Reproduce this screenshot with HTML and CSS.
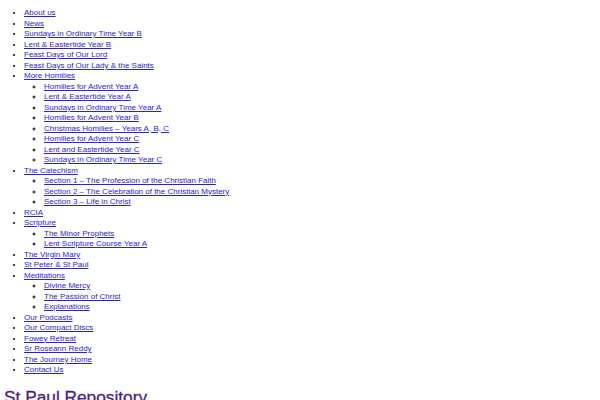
FILE: index.html
```html
<!DOCTYPE html>
<html lang="en">
<head>
<meta charset="utf-8">
<title>St Paul Repository</title>
<link rel="stylesheet" href="styles.css">
</head>
<body>
<ul class="menu">
  <li><a href="#">About us</a></li>
  <li><a href="#">News</a></li>
  <li><a href="#">Sundays in Ordinary Time Year B</a></li>
  <li><a href="#">Lent &amp; Eastertide Year B</a></li>
  <li><a href="#">Feast Days of Our Lord</a></li>
  <li><a href="#">Feast Days of Our Lady &amp; the Saints</a></li>
  <li><a href="#">More Homilies</a>
    <ul class="sub">
      <li><a href="#">Homilies for Advent Year A</a></li>
      <li><a href="#">Lent &amp; Eastertide Year A</a></li>
      <li><a href="#">Sundays in Ordinary Time Year A</a></li>
      <li><a href="#">Homilies for Advent Year B</a></li>
      <li><a href="#">Christmas Homilies – Years A, B, C</a></li>
      <li><a href="#">Homilies for Advent Year C</a></li>
      <li><a href="#">Lent and Eastertide Year C</a></li>
      <li><a href="#">Sundays in Ordinary Time Year C</a></li>
    </ul>
  </li>
  <li><a href="#">The Catechism</a>
    <ul class="sub">
      <li><a href="#">Section 1 – The Profession of the Christian Faith</a></li>
      <li><a href="#">Section 2 – The Celebration of the Christian Mystery</a></li>
      <li><a href="#">Section 3 – Life in Christ</a></li>
    </ul>
  </li>
  <li><a href="#">RCIA</a></li>
  <li><a href="#">Scripture</a>
    <ul class="sub">
      <li><a href="#">The Minor Prophets</a></li>
      <li><a href="#">Lent Scripture Course Year A</a></li>
    </ul>
  </li>
  <li><a href="#">The Virgin Mary</a></li>
  <li><a href="#">St Peter &amp; St Paul</a></li>
  <li><a href="#">Meditations</a>
    <ul class="sub">
      <li><a href="#">Divine Mercy</a></li>
      <li><a href="#">The Passion of Christ</a></li>
      <li><a href="#">Explanations</a></li>
    </ul>
  </li>
  <li><a href="#">Our Podcasts</a></li>
  <li><a href="#">Our Compact Discs</a></li>
  <li><a href="#">Fowey Retreat</a></li>
  <li><a href="#">Sr Roseann Reddy</a></li>
  <li><a href="#">The Journey Home</a></li>
  <li><a href="#">Contact Us</a></li>
</ul>
<h1 class="site-title">St Paul Repository</h1>
</body>
</html>
```

FILE: styles.css
```css
html, body {
  background: #ffffff;
}
body {
  margin: 0;
  padding: 8px 4px 0;
  font-family: "Liberation Sans", Arial, sans-serif;
  font-size: 8px;
  line-height: 10.5px;
  color: #000000;
}
.menu {
  margin: 0;
  padding-left: 20px;
  list-style: disc;
}
.sub {
  margin: 0;
  padding-left: 20px;
  list-style: circle;
}
.menu a {
  color: #2a22d8;
  text-decoration: underline;
}
.site-title {
  margin: 11px 0 0;
  font-family: "Liberation Sans", Arial, sans-serif;
  font-size: 17.3px;
  line-height: 20px;
  font-weight: normal;
  color: #4a1d8a;
  -webkit-text-stroke: 0.3px #4a1d8a;
}
```
